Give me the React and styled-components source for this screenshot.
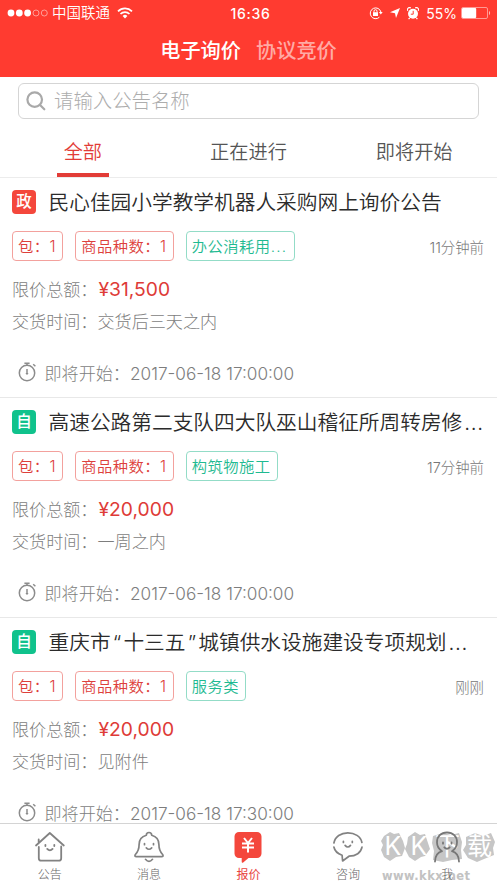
import React from 'react';
import styled, { createGlobalStyle } from 'styled-components';

const notices = [
  {
    id: 1,
    badge: '政',
    badgeColor: '#f4473c',
    title: '民心佳园小学教学机器人采购网上询价公告',
    category: '办公消耗用',
    categoryCut: true,
    ago: '11分钟前',
    price: '¥31,500',
    delivery: '交货后三天之内',
    start: '2017-06-18 17:00:00',
  },
  {
    id: 2,
    badge: '自',
    badgeColor: '#10c28c',
    title: '高速公路第二支队四大队巫山稽征所周转房修',
    titleCut: true,
    category: '构筑物施工',
    ago: '17分钟前',
    price: '¥20,000',
    delivery: '一周之内',
    start: '2017-06-18 17:00:00',
  },
  {
    id: 3,
    badge: '自',
    badgeColor: '#10c28c',
    title: '重庆市“十三五”城镇供水设施建设专项规划',
    titleCut: true,
    category: '服务类',
    ago: '刚刚',
    price: '¥20,000',
    delivery: '见附件',
    start: '2017-06-18 17:30:00',
  },
];

const SignalIcon = () => (
  <svg width="42" height="10" viewBox="0 0 42 10">
    <g fill="#fff">
      <circle cx="4" cy="5" r="3.4" />
      <circle cx="12.3" cy="5" r="3.4" />
      <circle cx="20.6" cy="5" r="3.4" />
    </g>
    <g fill="none" stroke="#ffb5b0" strokeWidth="0.8">
      <circle cx="29" cy="5" r="3" />
      <circle cx="37.3" cy="5" r="3" />
    </g>
  </svg>
);

const WifiIcon = () => (
  <svg width="16" height="12" viewBox="0 0 16 12" fill="none" stroke="#fff" strokeWidth="1.7">
    <path d="M1 4.3a10 10 0 0 1 14 0" />
    <path d="M3.5 7a6.4 6.4 0 0 1 9 0" />
    <path d="M8 11.4 5.6 9a3.4 3.4 0 0 1 4.8 0z" fill="#fff" stroke="none" />
  </svg>
);

const LockIcon = () => (
  <svg width="14" height="14" viewBox="0 0 14 14" fill="none" stroke="#fff">
    <path d="M10.4 11.2A5.4 5.4 0 1 1 11.9 6" strokeWidth="1" />
    <path d="M9.9 6h3.8l-1.9 2.4z" fill="#fff" stroke="none" />
    <rect x="4" y="6.2" width="5" height="3.8" fill="#fff" stroke="none" />
    <path d="M5 6.5V5.2a1.5 1.5 0 0 1 3 0v1.3" strokeWidth="1" />
  </svg>
);

const LocationIcon = () => (
  <svg width="10" height="10" viewBox="0 0 10 10">
    <path d="M10 0 6 10 5 5.2 0 4.3z" fill="#fff" />
  </svg>
);

const AlarmIcon = () => (
  <svg width="12" height="13" viewBox="0 0 12 13">
    <circle cx="6" cy="6.8" r="5" fill="#fff" />
    <path d="M.7 3.8A2.2 2.2 0 0 1 3.8.9M8.2.9a2.2 2.2 0 0 1 3.1 2.9M2.7 10.8l-1.1 1.4M9.3 10.8l1.1 1.4" stroke="#fff" strokeWidth="1.2" fill="none" />
    <path d="M6.2 3.8v3.4H3.8" stroke="#ff3b30" strokeWidth="1" fill="none" />
  </svg>
);

const BatteryIcon = () => (
  <svg width="30" height="12" viewBox="0 0 30 12">
    <rect x="0.5" y="0.5" width="26" height="11" rx="1.5" fill="none" stroke="#ff9a94" />
    <rect x="1" y="1" width="14.2" height="10" rx="1" fill="#fff" />
    <path d="M28 4v4c1.4-.4 1.4-3.6 0-4" fill="#ffb5b0" />
  </svg>
);

const SearchIcon = () => (
  <svg width="20" height="20" viewBox="0 0 20 20" fill="none" stroke="#a9a9a9" strokeWidth="2.2">
    <circle cx="8.7" cy="8.6" r="7.3" />
    <path d="m13.8 13.8 4.5 4.5" strokeLinecap="round" />
  </svg>
);

const StopwatchIcon = () => (
  <svg width="19" height="20" viewBox="0 0 19 20" fill="none" stroke="#8c8c8c" strokeWidth="1.5">
    <circle cx="9" cy="11" r="7.7" />
    <path d="M6.4 1.2h5.2M9 1.2v2M9 7v3.5M15.2 2.3l2.2 2" />
    <circle cx="9" cy="11.4" r="1.2" fill="#8c8c8c" stroke="none" />
  </svg>
);

const HomeIcon = () => (
  <svg width="32" height="32" viewBox="0 0 32 32" fill="none" stroke="#828282" strokeWidth="1.8" strokeLinecap="round" strokeLinejoin="round">
    <path d="M2 14.5 15.8 2l14 12.5M4.7 11.5v-3" />
    <path d="M4.8 16v11.2a2.5 2.5 0 0 0 2.5 2.5h17.4a2.5 2.5 0 0 0 2.5-2.5V15.5" />
    <path d="M11.4 13.8V15M20.3 13.8V15M13.2 17.9q2.7 2.9 5.4 0" />
  </svg>
);

const BellIcon = () => (
  <svg width="32" height="32" viewBox="0 0 32 32" fill="none" stroke="#828282" strokeWidth="1.7" strokeLinecap="round" strokeLinejoin="round">
    <path d="M13.3 4.2a2.7 2.7 0 0 1 5.4 0c4.7 1.2 7.2 4.8 7.2 9.3 0 5.5 1.6 7.7 3.7 10q1.3 2.2-1 2.2H3.4q-2.3 0-1-2.2c2.1-2.3 3.7-4.5 3.7-10 0-4.5 2.5-8.1 7.2-9.3" />
    <path d="M12.5 28.3q3.5 4.3 7 0M11.5 12.5v1.2M20.5 12.5v1.2M13.3 16.8q2.7 2.9 5.4 0" />
  </svg>
);

const QuoteIcon = () => (
  <svg width="32" height="32" viewBox="0 0 32 32">
    <path d="M7 1h18a4.5 4.5 0 0 1 4.5 4.5v17A4.5 4.5 0 0 1 25 27h-8.500l-5.300 4.500q-1.500 1-1.500-1V27H7a4.500 4.500 0 0 1-4.500-4.500v-17A4.500 4.500 0 0 1 7 1" fill="#f4473c" />
    <path d="m12 7 4 5 4-5M10 12.500h12M10 16.500h12M16 12.500v9" fill="none" stroke="#fff" strokeWidth="2" />
  </svg>
);

const ChatIcon = () => (
  <svg width="32" height="32" viewBox="0 0 32 32" fill="none" stroke="#828282" strokeWidth="1.7" strokeLinecap="round" strokeLinejoin="round">
    <path d="M1.9 12C3 5.500 9 1.800 15.800 1.800S28.800 5.500 29.900 11.500" />
    <path d="M1.900 16c.8 4 4 6.800 8.200 8.200l.5 5.800 6.400-4.800c7 0 12-3.600 13-9" />
    <path d="M11.400 10.300v1.200M20.300 10.300v1.200M13.100 14.400q2.700 3.200 5.400 0" />
  </svg>
);

const UserIcon = () => (
  <svg width="32" height="32" viewBox="0 0 32 32" fill="none" stroke="#777" strokeWidth="1.8" strokeLinecap="round" strokeLinejoin="round">
    <path d="M4 30.500c.2-6 2.600-9 7-10.300C7.800 18 6 14.900 6 11.200 6 5.500 10 1.500 16 1.500s10 4 10 9.700c0 3.700-1.800 6.800-5 9 4.400 1.300 6.800 4.300 7 10.300" />
    <path d="M12 11.500v1.200M20.500 11.500v1.200M13.300 16.300q2.700 2.900 5.400 0" />
  </svg>
);

const navItems = [
  { label: '公告', icon: <HomeIcon /> },
  { label: '消息', icon: <BellIcon /> },
  { label: '报价', icon: <QuoteIcon />, active: true },
  { label: '咨询', icon: <ChatIcon /> },
  { label: '我', icon: <UserIcon /> },
];

// latin quotes sit too tight between chinese characters
const spaceQuotes = (text) =>
  text
    .split(/([“”])/)
    .map((part, i) => (i % 2 ? <Quote key={i}>{part}</Quote> : part));

const NoticeCard = ({ notice }) => (
  <Card>
    <TitleRow>
      <Badge $color={notice.badgeColor}>{notice.badge}</Badge>
      <Title>
        {spaceQuotes(notice.title)}
        {notice.titleCut && <Dots $wide>...</Dots>}
      </Title>
    </TitleRow>
    <TagRow>
      <Tag>包：1</Tag>
      <Tag>商品种数：1</Tag>
      <Tag $green>
        {notice.category}
        {notice.categoryCut && <Dots>...</Dots>}
      </Tag>
      <Ago>{notice.ago}</Ago>
    </TagRow>
    <InfoRow>
      限价总额：<Price>{notice.price}</Price>
    </InfoRow>
    <InfoRow>交货时间：{notice.delivery}</InfoRow>
    <StartRow>
      <StopwatchIcon />
      <StartLabel>即将开始：</StartLabel>
      <StartTime>{notice.start}</StartTime>
    </StartRow>
  </Card>
);

const App = () => (
  <Screen>
    <GlobalStyle />
    <Header>
      <StatusBar>
        <StatusSide>
          <SignalIcon />
          <Carrier>中国联通</Carrier>
          <WifiIcon />
        </StatusSide>
        <Clock>16:36</Clock>
        <StatusSide $right>
          <LockIcon />
          <LocationIcon />
          <AlarmIcon />
          <Percent>55%</Percent>
          <BatteryIcon />
        </StatusSide>
      </StatusBar>
      <HeaderTabs>
        <HeaderTab $active>电子询价</HeaderTab>
        <HeaderTab>协议竞价</HeaderTab>
      </HeaderTabs>
    </Header>
    <SearchBox>
      <SearchIcon />
      <span>请输入公告名称</span>
    </SearchBox>
    <Tabs>
      <Tab $active>全部</Tab>
      <Tab>正在进行</Tab>
      <Tab>即将开始</Tab>
    </Tabs>
    <List>
      {notices.map((notice) => (
        <NoticeCard key={notice.id} notice={notice} />
      ))}
    </List>
    <BottomNav>
      <Watermark>
        <svg width="116" height="32" viewBox="0 0 116 32" fill="#c6c6c6">
          <path d="m4 5 6-4 4 2 5-1 4 8 2 7-3 8-6 1-6 4-6-4-3-7 2-5-2-4z" />
          <path d="m28 6 7-5 5 3 5-1 3 9 2 6-5 7-4 1-6 4-6-4-4-8 2-5z" />
          <path d="m53 5 10-3 8 2 8-2 3 9-1 8 1 9-10 1-9 2-10-2 1-9-2-8z" />
          <path d="m86 6 9-4 8 3 8-3 4 9-2 6 1 7-10 4-7 3-9-4-5-8 3-5z" />
        </svg>
        <WatermarkName>
          <span>K</span>
          <span>K</span>
          <span>下</span>
          <span>载</span>
        </WatermarkName>
        <WatermarkUrl>www.kkx.net</WatermarkUrl>
      </Watermark>
      {navItems.map((item) => (
        <NavItem key={item.label} $active={item.active}>
          {item.icon}
          <span>{item.label}</span>
        </NavItem>
      ))}
    </BottomNav>
  </Screen>
);

export default App;

const GlobalStyle = createGlobalStyle`
  * {
    box-sizing: border-box;
  }

  body {
    margin: 0;
    background: #fff;
    font-family: Inter, 'Noto Sans CJK SC', sans-serif;
    font-weight: 300;
  }

  svg {
    display: block;
    flex-shrink: 0;
  }
`;

const Screen = styled.div`
  display: flex;
  flex-direction: column;
  width: 497px;
  height: 883px;
  overflow: hidden;
  background: #fff;
`;

const Header = styled.header`
  flex-shrink: 0;
  height: 77px;
  background: #ff3b30;
  color: #fff;
`;

const StatusBar = styled.div`
  display: grid;
  grid-template-columns: 1fr auto 1fr;
  align-items: center;
  height: 26px;
  padding: 0 6px 0 7px;
`;

const StatusSide = styled.div`
  display: flex;
  align-items: center;
  justify-content: ${({ $right }) => ($right ? 'flex-end' : 'flex-start')};
  gap: ${({ $right }) => ($right ? '7px' : '0')};
`;

const Carrier = styled.span`
  margin: 0 7px 0 3px;
  font-size: 14.5px;
  line-height: 20px;
  font-weight: 350;
`;

const Clock = styled.span`
  padding-left: 3px;
  font-size: 14px;
  font-weight: 500;
  letter-spacing: 0.7px;
`;

const Percent = styled.span`
  margin-right: -3px;
  font-size: 14px;
  font-weight: 400;
`;

const HeaderTabs = styled.div`
  display: flex;
  justify-content: center;
  gap: 15px;
  padding-top: 10px;
`;

const HeaderTab = styled.span`
  font-size: 20.2px;
  line-height: 30px;
  font-weight: 500;
  color: ${({ $active }) => ($active ? '#fff' : '#ffaaa5')};
`;

const SearchBox = styled.div`
  display: flex;
  align-items: center;
  flex-shrink: 0;
  gap: 8px;
  height: 36px;
  margin: 6px 18px 0;
  padding: 0 7px;
  border: 1px solid #d5d5d5;
  border-radius: 6px;
  color: #adadad;
  font-size: 19.4px;
  line-height: 34px;
`;

const Tabs = styled.div`
  display: grid;
  grid-template-columns: repeat(3, 1fr);
  justify-items: center;
  flex-shrink: 0;
  height: 59px;
  border-bottom: 1px solid #ececec;
`;

const Tab = styled.div`
  height: 58px;
  padding: 0 7px;
  border-bottom: 4px solid ${({ $active }) => ($active ? '#e23c37' : 'transparent')};
  color: ${({ $active }) => ($active ? '#e23c37' : '#555')};
  font-size: 19.2px;
  line-height: 66px;
  font-weight: 350;
`;

const List = styled.main`
  flex: 1;
  min-height: 0;
  overflow: hidden;
`;

const Card = styled.article`
  height: 220px;
  padding: 9px 12px 0;
  border-bottom: 1px solid #e8e8e8;
`;

const TitleRow = styled.div`
  display: flex;
  align-items: center;
  gap: 12.5px;
  height: 30px;
`;

const Badge = styled.span`
  width: 24px;
  height: 24px;
  border-radius: 4px;
  background: ${({ $color }) => $color};
  color: #fff;
  font-size: 15.5px;
  line-height: 24px;
  font-weight: 500;
  text-align: center;
`;

const Title = styled.h2`
  margin: 0;
  padding-top: 1px;
  color: #2b2b2b;
  font-size: 20.7px;
  line-height: 31px;
  font-weight: 350;
  white-space: nowrap;
`;

const Quote = styled.span`
  padding: 0 2.2px;
`;

const Dots = styled.span`
  margin-left: ${({ $wide }) => ($wide ? '2px' : '0')};
  letter-spacing: ${({ $wide }) => ($wide ? '0.7px' : '1.3px')};
`;

const TagRow = styled.div`
  display: flex;
  align-items: center;
  gap: 12px;
  height: 30px;
  margin-top: 14px;
`;

const Tag = styled.span`
  height: 30px;
  padding: 0 6px 0 5px;
  border: 1px solid ${({ $green }) => ($green ? '#93dcc7' : '#f3a19d')};
  border-radius: 4px;
  color: ${({ $green }) => ($green ? '#1fba91' : '#dd403b')};
  font-size: 15.3px;
  line-height: 29px;
  font-weight: 350;
  letter-spacing: 0.5px;
  white-space: nowrap;
`;

const Ago = styled.span`
  margin-left: auto;
  padding-right: 1px;
  color: #777;
  font-size: 14.4px;
`;

const InfoRow = styled.div`
  display: flex;
  align-items: center;
  height: 32px;
  color: #7d7d7d;
  font-size: 17.1px;
  line-height: 32px;

  ${TagRow} + & {
    margin-top: 13px;
  }
`;

const Price = styled.span`
  padding-left: 1px;
  color: #de3b37;
  font-size: 19.3px;
  line-height: 30px;
  font-weight: 400;
  margin-bottom: 2px;
`;

const StartRow = styled.div`
  display: flex;
  align-items: center;
  height: 32px;
  margin-top: 18px;
  padding-left: 6px;
  color: #7d7d7d;
  font-size: 17.1px;
`;

const StartLabel = styled.span`
  margin-left: 7.5px;
`;

const StartTime = styled.time`
  padding-top: 2px;
  font-size: 17.2px;
`;

const BottomNav = styled.nav`
  position: relative;
  display: grid;
  grid-template-columns: repeat(5, 1fr);
  flex-shrink: 0;
  height: 60px;
  border-top: 1px solid #d4d4d4;
  background: #fff;
`;

const NavItem = styled.div`
  position: relative;
  display: flex;
  flex-direction: column;
  align-items: center;
  gap: 3px;
  padding-top: 7px;
  color: ${({ $active }) => ($active ? '#e8443e' : '#666')};
  font-size: 12px;
  line-height: 18px;
  font-weight: ${({ $active }) => ($active ? 400 : 300)};
`;

const Watermark = styled.div`
  position: absolute;
  top: 7px;
  left: 380px;
  width: 116px;
`;

const WatermarkName = styled.div`
  position: absolute;
  top: 0;
  left: 0;
  display: grid;
  grid-template-columns: 26px 26px 31px 33px;
  justify-items: center;
  color: #fff;
  font-size: 25px;
  line-height: 31px;
  font-weight: 400;
`;

const WatermarkUrl = styled.div`
  margin-top: 6px;
  padding-left: 2px;
  color: #c2c2c2;
  font-family: 'DejaVu Sans', sans-serif;
  font-size: 11.5px;
  line-height: 14px;
  font-weight: 700;
  letter-spacing: 0.4px;
`;
